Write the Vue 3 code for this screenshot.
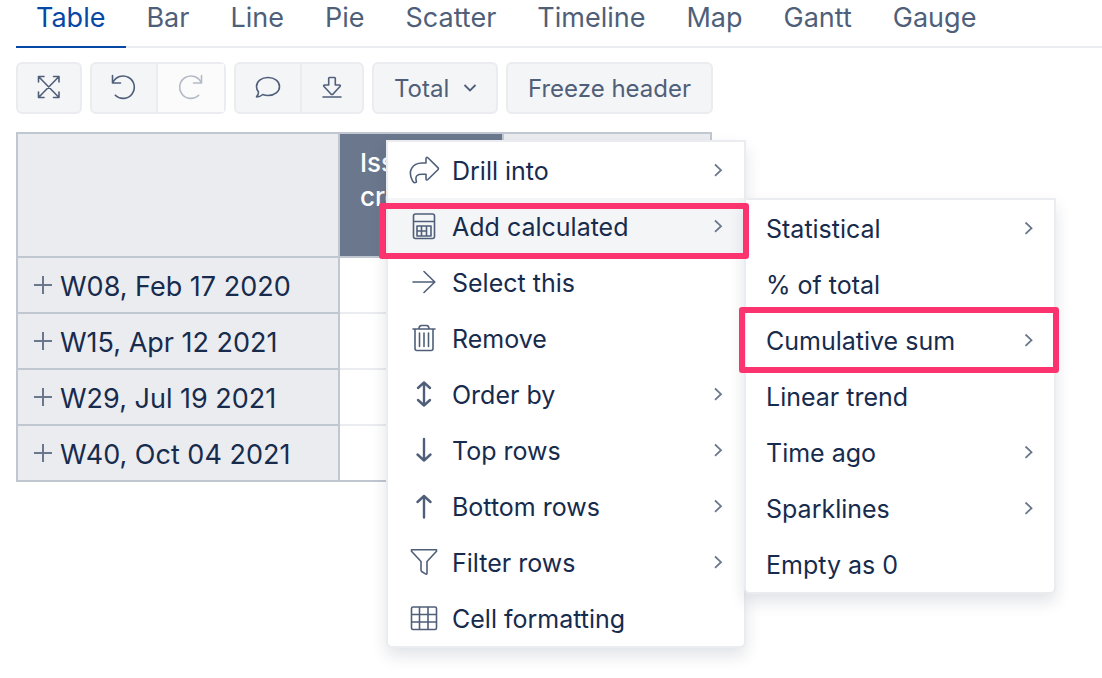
<script setup>
import { ref } from 'vue'

const tabs = ['Table', 'Bar', 'Line', 'Pie', 'Scatter', 'Timeline', 'Map', 'Gantt', 'Gauge']
const activeTab = ref('Table')
const totalMode = ref('Total')

const rows = ['W08, Feb 17 2020', 'W15, Apr 12 2021', 'W29, Jul 19 2021', 'W40, Oct 04 2021']

const calculated = [
  { label: 'Statistical', more: true },
  { label: '% of total' },
  { label: 'Cumulative sum', more: true, marked: true },
  { label: 'Linear trend' },
  { label: 'Time ago', more: true },
  { label: 'Sparklines', more: true },
  { label: 'Empty as 0' },
]

const actions = [
  {
    label: 'Drill into',
    more: true,
    icon: 'M8 28.4c-1.4.7-2.6 0-3.3-1.3C-1 17 4.500 9.200 14 9h4V4.600c0-1.300 1-1.700 1.900-.8l10 9.800c.7.700.7 1.400 0 2.100l-10 9.800c-.9.900-1.900.5-1.900-.8v-4.500h-4c-4.600 0-6.500 1.600-6 5.400.2 1.500.8 2.400 0 2.800z',
  },
  {
    label: 'Add calculated',
    more: true,
    marked: true,
    children: calculated,
    icon: 'M7.500 4h17q2 0 2 2v20.500q0 2-2 2h-17q-2 0-2-2V6q0-2 2-2zM5.500 11.500h21M9 16h14v10H9zM9 21h9.500M13.500 16v10M18.500 16v10',
  },
  { label: 'Select this', icon: 'M5 16h21.500M16 5.500L26.800 16 16 26.500' },
  {
    label: 'Remove',
    icon: 'M5 7h22M11 7c0-2.500 1-3.500 2.500-3.500h5C20 3.500 21 4.500 21 7M7 7v19.500q0 2 2 2h14q2 0 2-2V7M11.500 11v13.500M16 11v13.500M20.500 11v13.500',
  },
  { label: 'Order by', more: true, bold: true, icon: 'M16 4.500v23M10 10l6-5.500 6 5.500M10 22l6 5.500 6-5.500' },
  { label: 'Top rows', more: true, bold: true, icon: 'M16 5v21.500M9.500 20.500l6.500 6 6.500-6' },
  { label: 'Bottom rows', more: true, bold: true, icon: 'M16 27.500V6M9.500 12L16 6l6.500 6' },
  { label: 'Filter rows', more: true, icon: 'M3.500 3.800h25v1.500L19 15.500V27q0 1.800-1.500.9l-3.500-2.200q-1-.6-1-1.700v-8.500L3.500 5.300z' },
  { label: 'Cell formatting', icon: 'M5 5h22q1.500 0 1.500 1.500v19.500q0 1.500-1.500 1.500H5q-1.500 0-1.500-1.500V6.500Q3.500 5 5 5zM3.500 12.500h25M3.500 20h25M11.500 5v22.500M20 5v22.500' },
]
</script>

<template>
  <main class="report">
    <nav class="tabs" aria-label="Chart type">
      <button
        v-for="tab in tabs"
        :key="tab"
        type="button"
        class="tab"
        :class="{ active: tab === activeTab }"
        @click="activeTab = tab"
      >{{ tab }}</button>
    </nav>

    <div class="toolbar">
      <div class="group">
        <button type="button" class="tool" aria-label="Full screen">
          <svg class="icon" viewBox="0 0 32 32"><path d="M6 5l19.500 20M25.500 5L6 25M5.500 10v-5.500H11M20.500 4.500H26V10M5.500 20v5.500H11M20.500 25.500H26V20" /></svg>
        </button>
      </div>
      <div class="group">
        <button type="button" class="tool" aria-label="Undo">
          <svg class="icon" viewBox="0 0 32 32"><path d="M4.500 3.500v7.500h8M4.800 10.800a11.200 11.200 0 1 1 2.500 12.400" /></svg>
        </button>
        <button type="button" class="tool faded" aria-label="Redo" disabled>
          <svg class="icon" viewBox="0 0 32 32"><path d="M26.500 3.500v7.500h-8M26.200 10.800a11.200 11.200 0 1 0-2.500 12.400" /></svg>
        </button>
      </div>
      <div class="group">
        <button type="button" class="tool" aria-label="Comment">
          <svg class="icon" viewBox="0 0 32 32"><path d="M16 5.500c6.800 0 11.500 4 11.500 9s-4.700 9-11.500 9c-1.900 0-3.600-.3-5.200-1-1.700 1.400-4 2.500-6.300 2.400 1.200-1.300 2-3.200 2-4.900C5.200 18.400 4.500 16.500 4.500 14.500c0-5 4.700-9 11.500-9z" /></svg>
        </button>
        <button type="button" class="tool narrow" aria-label="Download">
          <svg class="icon" viewBox="0 0 32 32"><path d="M13.500 5.500h5q.8 0 .8.800v6.700h4q1.700.2.700 1.500l-6.700 7.300q-1.300 1.200-2.600 0L8 14.500q-1-1.300.7-1.500h4V6.300q0-.8.8-.8zM7 25h18" /></svg>
        </button>
      </div>
      <div class="group dropdown">
        <select v-model="totalMode" class="select" aria-label="Totals">
          <option>Total</option>
        </select>
        <svg class="caret" viewBox="0 0 16 16"><path d="M2.500 5L8 10.500 13.500 5" /></svg>
      </div>
      <div class="group">
        <button type="button" class="tool text">Freeze header</button>
      </div>
    </div>

    <section class="pivot">
      <table class="grid">
        <colgroup>
          <col class="col-label">
          <col class="col-value">
          <col class="col-extra">
        </colgroup>
        <thead>
          <tr>
            <th></th>
            <th class="selected" scope="col">Issues created</th>
            <th></th>
          </tr>
        </thead>
        <tbody>
          <tr v-for="row in rows" :key="row">
            <th scope="row">
              <span class="row-label">
                <button type="button" class="expand" :aria-label="'Expand ' + row">
                  <svg viewBox="0 0 18 18"><path d="M9 0v18M0 9h18" /></svg>
                </button>
                <span class="label">{{ row }}</span>
              </span>
            </th>
            <td></td>
            <td></td>
          </tr>
        </tbody>
      </table>

      <ul class="menu actions">
        <li v-for="item in actions" :key="item.label" class="entry">
          <button type="button" class="item" :class="{ hovered: item.children }">
            <svg class="icon" :class="{ bold: item.bold }" viewBox="0 0 32 32"><path :d="item.icon" /></svg>
            <span class="label">{{ item.label }}</span>
            <svg v-if="item.more" class="more" viewBox="0 0 16 16"><path d="M5 2.500l6 5.700-6 5.700" /></svg>
          </button>
          <ul v-if="item.children" class="menu submenu">
            <li v-for="child in item.children" :key="child.label" class="entry">
              <button type="button" class="item">
                <span class="label">{{ child.label }}</span>
                <svg v-if="child.more" class="more" viewBox="0 0 16 16"><path d="M5.500 2.500l6 5.700-6 5.700" /></svg>
              </button>
              <span v-if="child.marked" class="mark mark-child"></span>
            </li>
          </ul>
          <span v-if="item.marked" class="mark mark-parent"></span>
        </li>
      </ul>
    </section>
  </main>
</template>

<style>
body {
  margin: 0;
  background: #fff;
}
</style>

<style scoped>
.report {
  min-height: 100vh;
  padding-left: 16px;
  box-sizing: border-box;
  overflow: hidden;
  font-family: Inter, "Liberation Sans", sans-serif;
  color: #172b4d;
}

button,
select {
  margin: 0;
  border: 0;
  background: none;
  font-family: inherit;
  color: inherit;
}

svg {
  display: block;
  flex: none;
  fill: none;
  stroke: currentColor;
}

.tabs {
  display: flex;
  box-shadow: inset 0 -2px #ebecf0;
}

.tab {
  height: 48px;
  padding: 0 21px 10px 20px;
  border-bottom: 2px solid transparent;
  font-size: 27px;
  line-height: 36px;
  color: #505f79;
}

.tab.active {
  border-color: #0747a6;
  color: #0747a6;
}

.toolbar {
  display: flex;
  gap: 8px;
  margin-top: 14px;
  color: #505f79;
}

.group {
  display: flex;
  height: 52px;
  box-sizing: border-box;
  border: 2px solid #ebecf0;
  border-radius: 6px;
  background: #f4f5f7;
}

.tool {
  display: flex;
  align-items: center;
  padding: 0 15px;
  font-size: 24px;
}

.tool:first-child:not(:last-child) {
  padding: 0 16px;
}

.tool + .tool {
  padding: 0 17px;
  border-left: 2px solid #ebecf0;
}

.tool + .tool.narrow {
  padding: 0 14px;
}

.tool.text {
  padding: 0 20px;
}

.tool.faded {
  background: #fbfbfc;
  color: #b5bbc6;
}

.icon {
  width: 32px;
  height: 32px;
  stroke-width: 1.6;
  stroke-linejoin: round;
  stroke-linecap: round;
}

.icon.bold {
  stroke-width: 2.4;
}

.dropdown {
  position: relative;
}

.select {
  appearance: none;
  padding: 0 46px 0 20px;
  font-size: 24px;
}

.caret {
  position: absolute;
  top: 16px;
  right: 18px;
  width: 16px;
  height: 16px;
  stroke-width: 1.8;
  pointer-events: none;
}

.pivot {
  position: relative;
  margin-top: 18px;
}

.grid {
  width: 696px;
  table-layout: fixed;
  border-collapse: collapse;
  border: 2px solid #c1c7d0;
}

.col-label {
  width: 322px;
}

.col-value {
  width: 164px;
}

th {
  height: 56px;
  padding: 0 16px;
  box-sizing: border-box;
  border: 2px solid #c1c7d0;
  background: #ebecf0;
  font-size: 27px;
  font-weight: 400;
  text-align: left;
}

thead th {
  height: 124px;
}

td {
  padding: 0;
  border-bottom: 2px solid #ebecf0;
}

tbody tr:last-child td {
  border-bottom-color: #c1c7d0;
}

.selected {
  padding: 12px 20px;
  background: #6b778c;
  font-size: 26px;
  font-weight: 500;
  line-height: 34px;
  vertical-align: top;
  color: #fff;
}

.row-label {
  display: flex;
  align-items: center;
  gap: 8px;
}

.expand {
  padding: 0;
  color: #6b778c;
}

.expand svg {
  width: 18px;
  height: 18px;
  stroke-width: 2;
}

.menu {
  position: absolute;
  box-sizing: border-box;
  margin: 0;
  padding: 0;
  border: 2px solid #ebecf0;
  border-radius: 0 0 6px 6px;
  background: #fff;
  box-shadow: 0 8px 16px rgba(9, 30, 66, 0.12);
  list-style: none;
}

.actions {
  top: 8px;
  left: 370px;
  width: 360px;
}

.submenu {
  top: 0;
  left: 100%;
  width: 312px;
}

.entry {
  position: relative;
}

.item {
  display: flex;
  align-items: center;
  gap: 12px;
  width: 100%;
  height: 56px;
  padding: 0 18px 0 20px;
  font-size: 25px;
  text-align: left;
}

.item .icon {
  color: #505f79;
}

.item.hovered {
  background: #f4f5f7;
}

.label {
  flex: 1;
  padding-top: 2px;
  white-space: nowrap;
}

.more {
  width: 16px;
  height: 16px;
  stroke-width: 1.8;
  color: #6b778c;
}

.mark {
  position: absolute;
  z-index: 1;
  border: 6px solid #fb3470;
  border-radius: 3px;
  pointer-events: none;
}

.mark-parent {
  inset: 5px -5px -5px -9px;
}

.mark-child {
  inset: -5px -5px -5px -7px;
}
</style>
